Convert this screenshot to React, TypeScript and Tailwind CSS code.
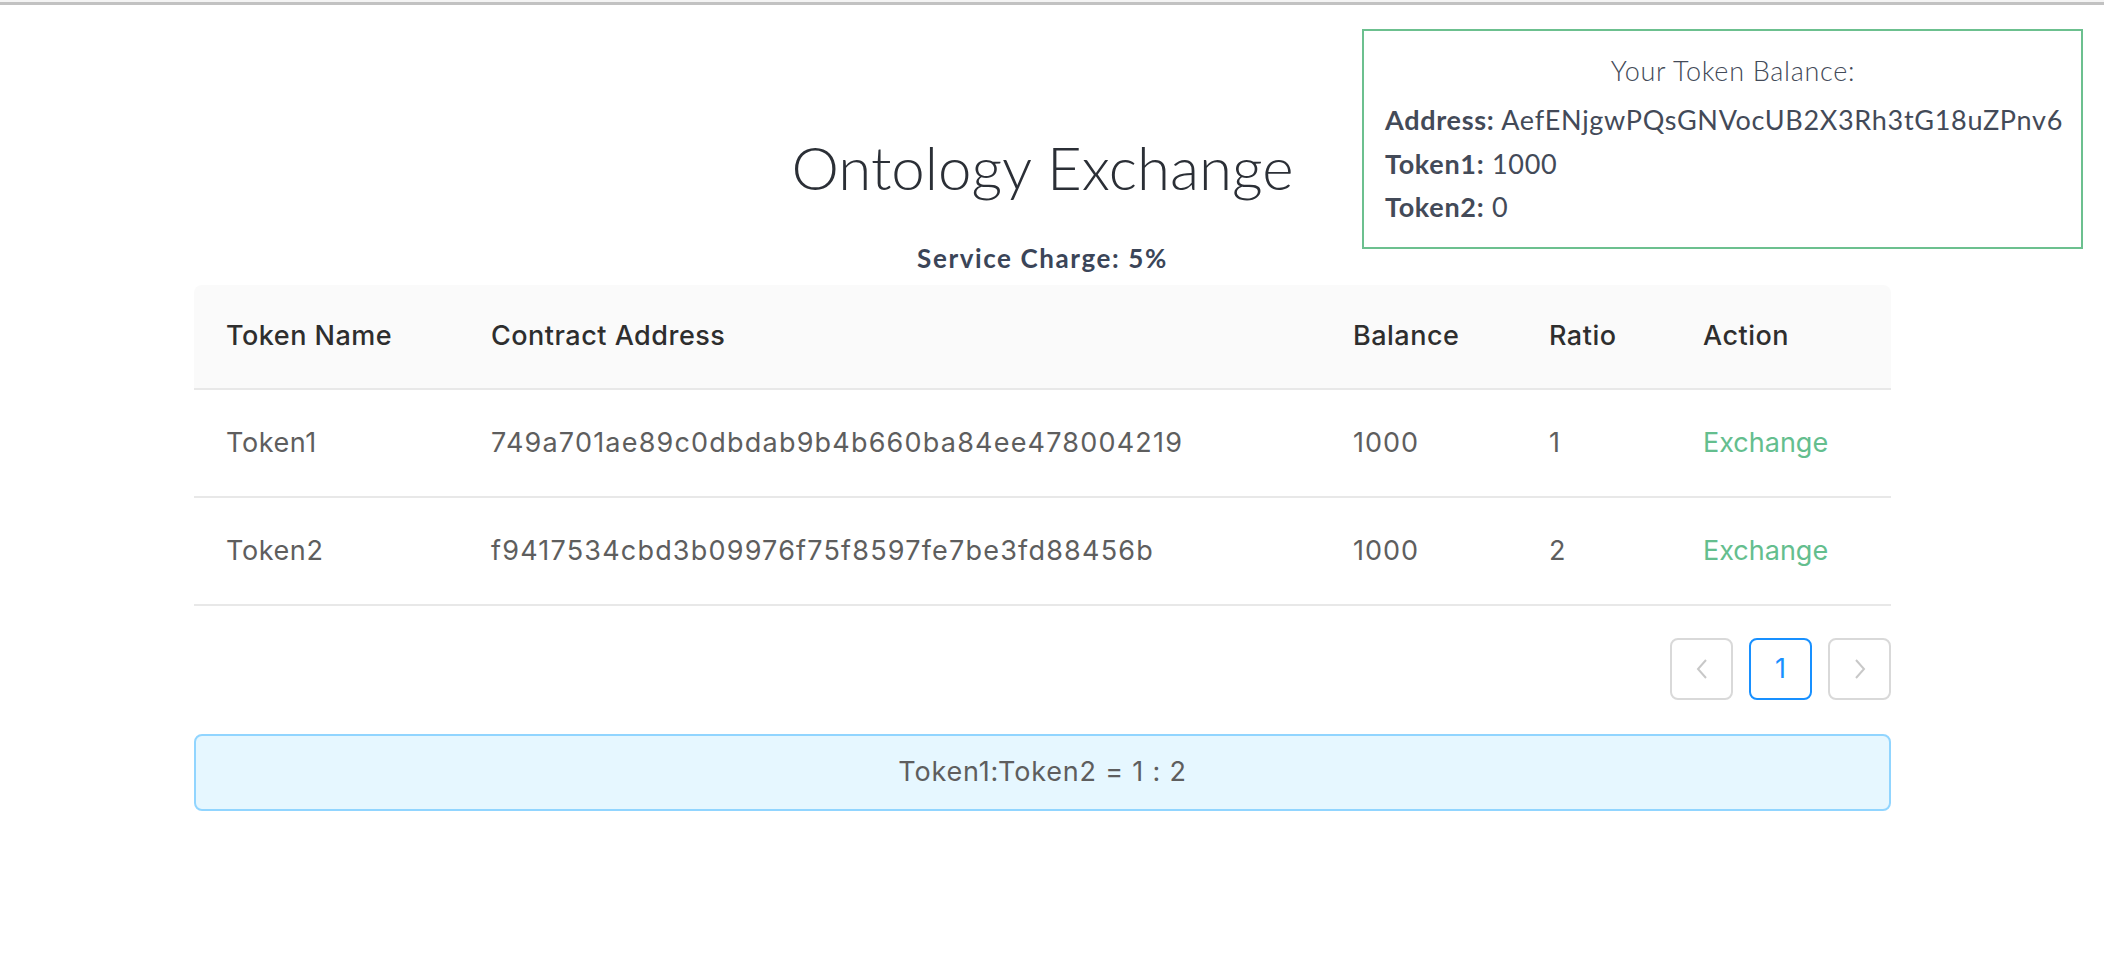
const tokens = [
  { name: "Token1", address: "749a701ae89c0dbdab9b4b660ba84ee478004219", balance: "1000", ratio: "1" },
  { name: "Token2", address: "f9417534cbd3b09976f75f8597fe7be3fd88456b", balance: "1000", ratio: "2" },
];

const cols = "grid grid-cols-[265px_862px_196px_154px_1fr] items-center";

function BalanceBox() {
  return (
    <div className="absolute top-[29px] right-[21px] w-[721px] h-[220px] border-2 border-[#6cc08f] bg-white pl-[21px] pt-[26px] text-[#434a58] font-['Lato',sans-serif] tracking-[0.7px]">
      <div className="text-center text-[27px] leading-none font-light">Your Token Balance:</div>
      <div className="mt-[14px] text-[27px] leading-[43.5px] whitespace-nowrap">
        <div>
          <span className="font-bold">Address:</span> AefENjgwPQsGNVocUB2X3Rh3tG18uZPnv6
        </div>
        <div>
          <span className="font-bold">Token1:</span> 1000
        </div>
        <div>
          <span className="font-bold">Token2:</span> 0
        </div>
      </div>
    </div>
  );
}

function Pager() {
  return (
    <div className="mt-[32px] flex justify-end gap-[16px]">
      <button className="w-[63px] h-[62px] rounded-[8px] border-2 border-[#d9d9d9] flex items-center justify-center text-[#c8c8c8]">
        <svg width="14" height="22" viewBox="0 0 14 22" fill="none" stroke="currentColor" strokeWidth="2">
          <path d="M11 2 L3 11 L11 20" />
        </svg>
      </button>
      <button className="w-[63px] h-[62px] rounded-[8px] border-2 border-[#1890ff] flex items-center justify-center text-[#1890ff] text-[27px] font-['Inter',sans-serif]">
        1
      </button>
      <button className="w-[63px] h-[62px] rounded-[8px] border-2 border-[#d9d9d9] flex items-center justify-center text-[#c8c8c8]">
        <svg width="14" height="22" viewBox="0 0 14 22" fill="none" stroke="currentColor" strokeWidth="2">
          <path d="M3 2 L11 11 L3 20" />
        </svg>
      </button>
    </div>
  );
}

export default function App() {
  return (
    <div className="relative min-h-screen bg-white">
      <div className="h-[5px] bg-[#f4f4f4] border-b-[3px] border-[#c2c2c2]" />
      <BalanceBox />
      <div className="ml-[194px] w-[1697px] flex flex-col">
        <h1 className="mt-[132px] text-center text-[60px] leading-none font-light text-[#2b2f36] font-['Lato',sans-serif]">
          Ontology Exchange
        </h1>
        <div className="mt-[48px] text-center text-[26px] leading-none font-bold tracking-[1.6px] text-[#3b4558] font-['Lato',sans-serif]">
          Service Charge: 5%
        </div>
        <div className="mt-[14px] font-['Inter',sans-serif] text-[27px]">
          <div className={`${cols} h-[105px] bg-[#fafafa] rounded-t-[8px] border-b-2 border-[#e8e8e8] font-medium text-[#2e2e2e] tracking-[0.5px]`}>
            <div className="px-8">Token Name</div>
            <div className="px-8">Contract Address</div>
            <div className="px-8">Balance</div>
            <div className="px-8">Ratio</div>
            <div className="px-8">Action</div>
          </div>
          {tokens.map((t) => (
            <div key={t.name} className={`${cols} h-[108px] border-b-2 border-[#e8e8e8] text-[#5e5e5e] tracking-[0.6px]`}>
              <div className="px-8">{t.name}</div>
              <div className="px-8 tracking-[1.2px]">{t.address}</div>
              <div className="px-8 tracking-[1px]">{t.balance}</div>
              <div className="px-8">{t.ratio}</div>
              <div className="px-8 text-[#64be8e] tracking-normal">Exchange</div>
            </div>
          ))}
        </div>
        <Pager />
        <div className="mt-[34px] h-[77px] rounded-[8px] border-2 border-[#91d5ff] bg-[#e6f7ff] flex items-center justify-center text-[27px] text-[#5e5e5e] tracking-[0.8px] font-['Inter',sans-serif]">
          Token1:Token2 = 1 : 2
        </div>
      </div>
    </div>
  );
}
